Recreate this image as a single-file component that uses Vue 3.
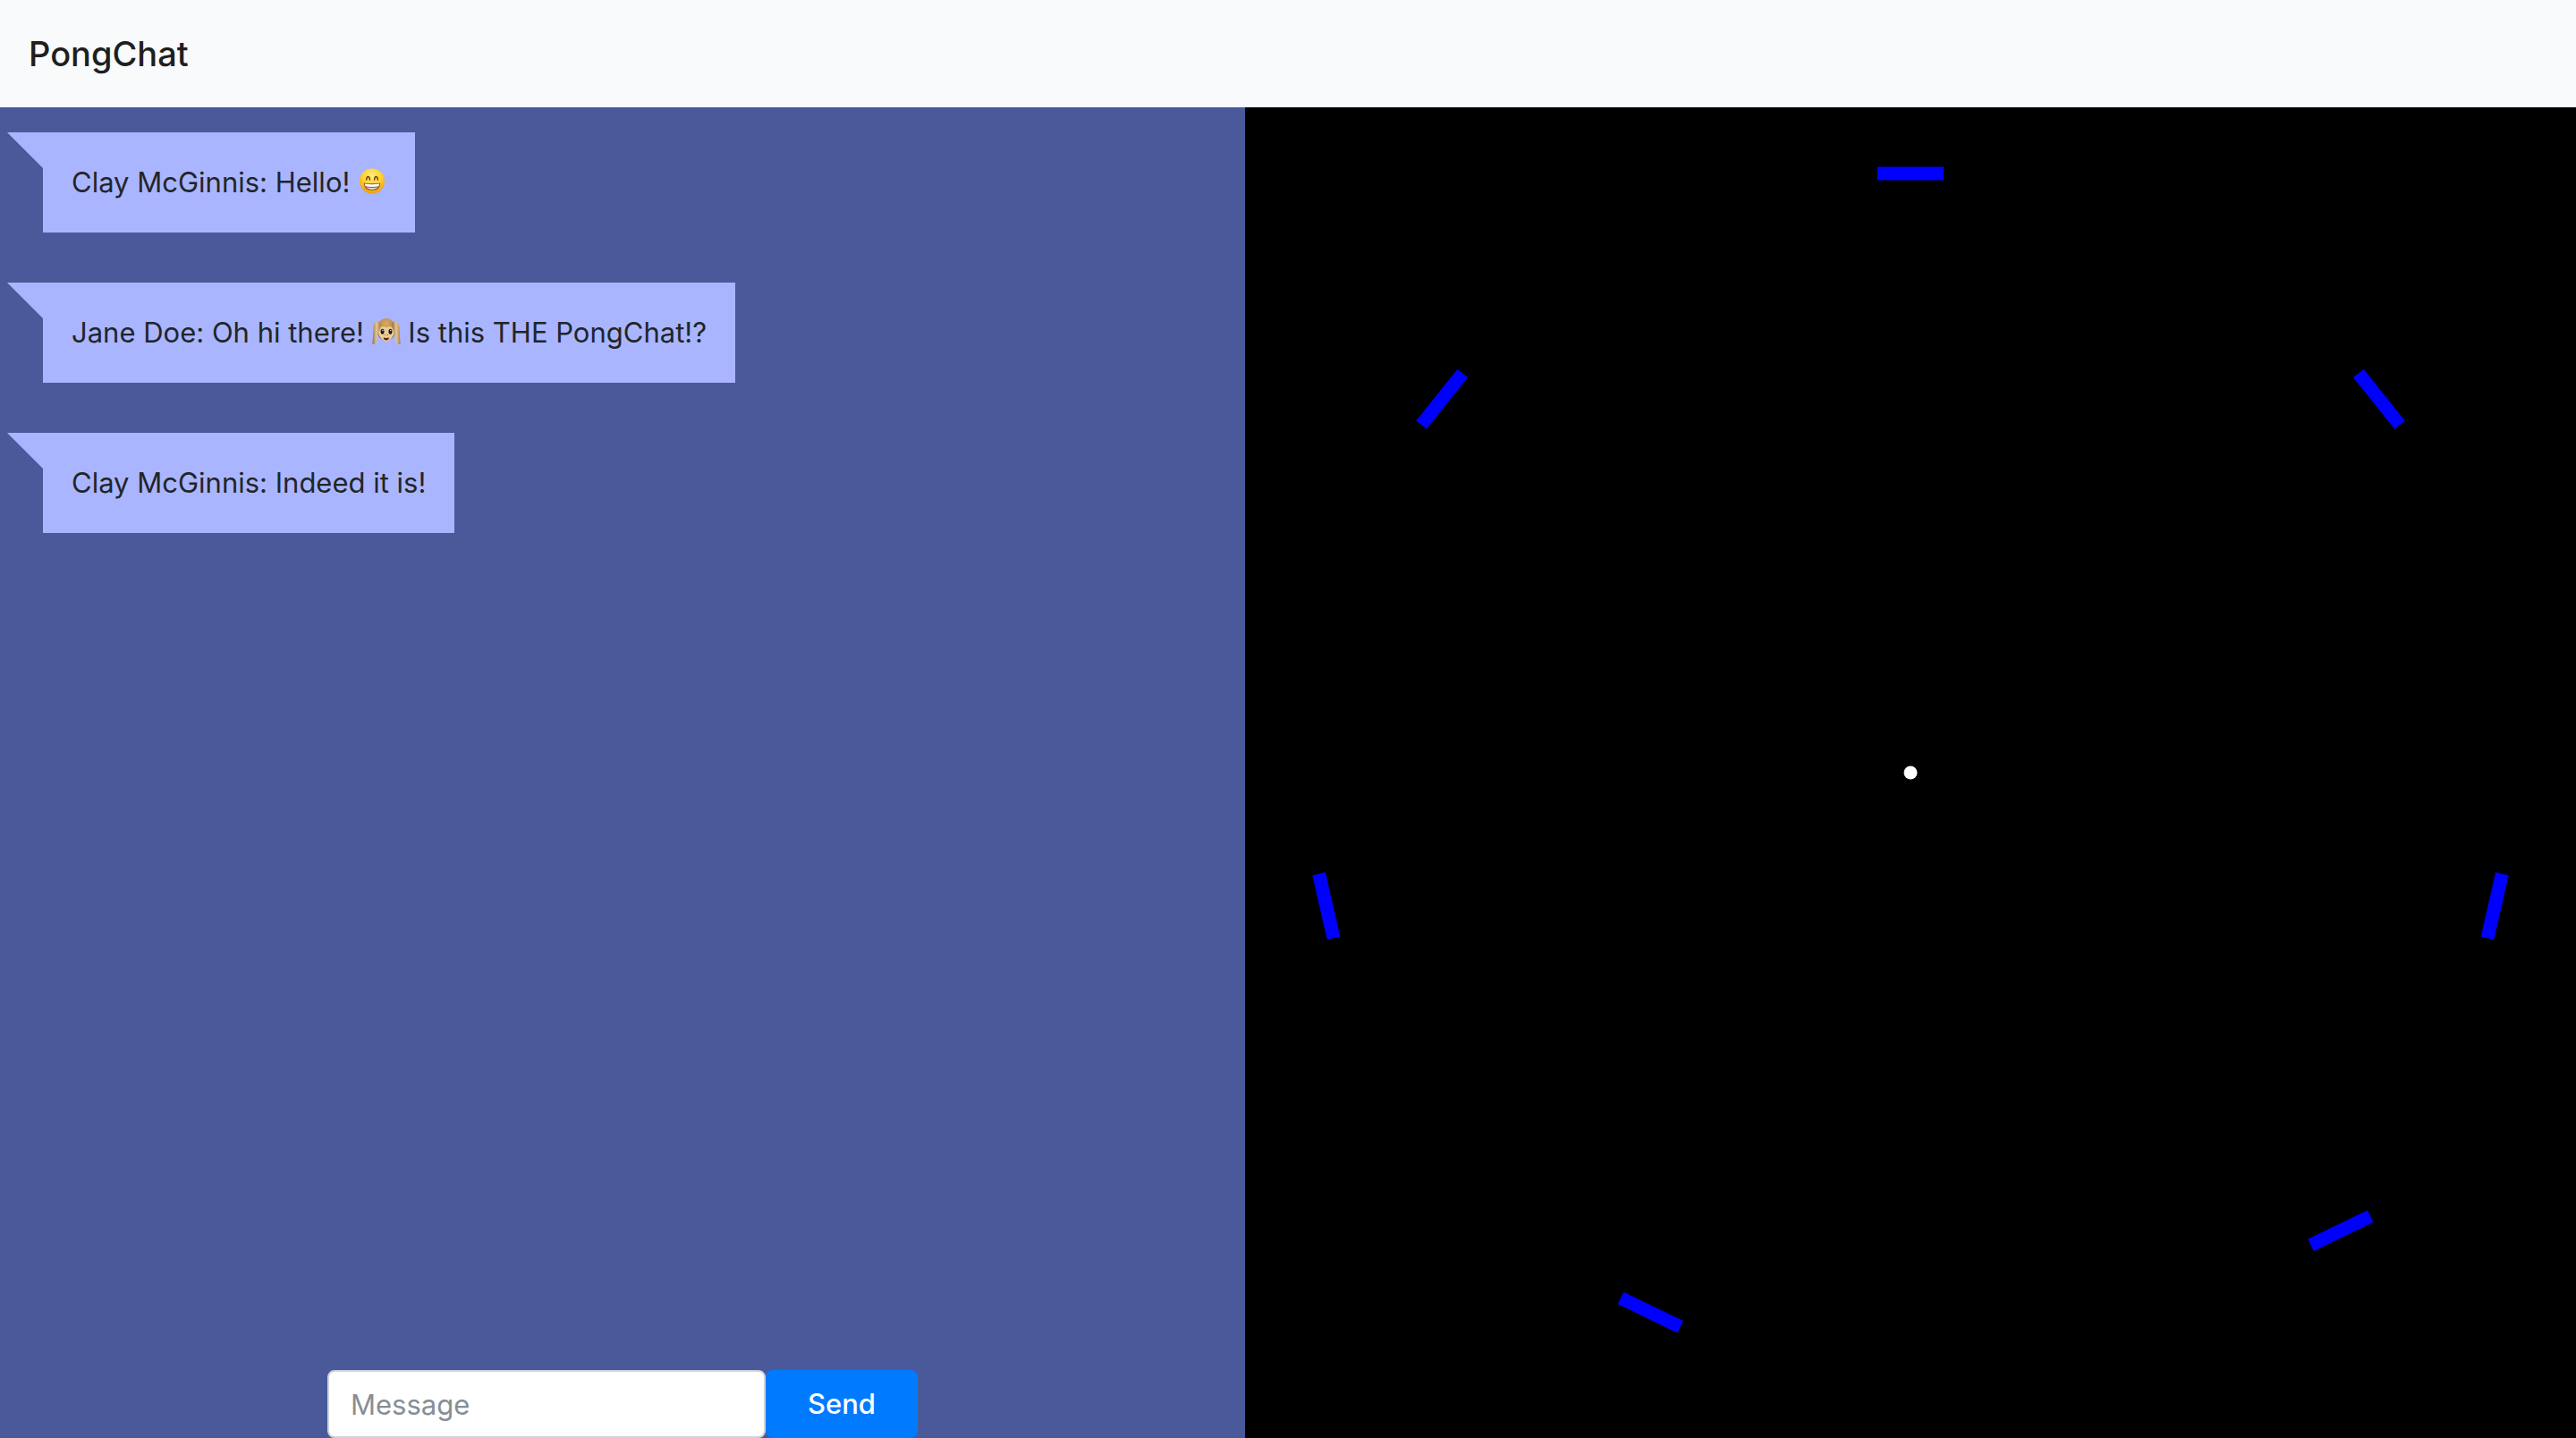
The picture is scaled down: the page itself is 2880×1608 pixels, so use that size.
<script setup>
import { ref } from 'vue'

const draft = ref('')

const messages = [
  { id: 1, author: 'Clay McGinnis', parts: [{ text: 'Hello! ' }, { emoji: 'grin' }] },
  {
    id: 2,
    author: 'Jane Doe',
    parts: [{ text: 'Oh hi there! ' }, { emoji: 'monkey' }, { text: ' Is this THE PongChat!?' }],
  },
  { id: 3, author: 'Clay McGinnis', parts: [{ text: 'Indeed it is!' }] },
]

// One paddle per side of the arena; slide is the travel along that side.
const slides = [0, 0, 0, -211, 0, 0, 0]
const paddles = slides.map((slide, side) => ({
  side,
  slide,
  angle: (side * 360) / slides.length,
}))
</script>

<template>
  <div class="page">
    <header class="navbar">
      <a class="brand" href="#">PongChat</a>
    </header>
    <main class="content">
      <section class="chat">
        <ul class="messages">
          <li v-for="m in messages" :key="m.id" class="bubble">
            <span>{{ m.author }}: </span>
            <template v-for="(part, i) in m.parts" :key="i">
              <svg v-if="part.emoji === 'grin'" class="emoji" viewBox="0 0 30 30" role="img" aria-label="😁">
                <defs>
                  <radialGradient id="grin-face" cx="50%" cy="30%" r="70%">
                    <stop offset="0" stop-color="#fff07a" />
                    <stop offset="0.55" stop-color="#fdd02f" />
                    <stop offset="1" stop-color="#ef9a10" />
                  </radialGradient>
                </defs>
                <circle cx="15" cy="15" r="14.500" fill="url(#grin-face)" />
                <path d="M8.500 13.500q.3-3.600 1.900-3.600t2 3.600M17.700 13.500q.3-3.600 1.900-3.600t2 3.600" fill="none" stroke="#75420c" stroke-width="1.600" stroke-linecap="round" />
                <path d="M5.500 17q9.500 1.800 19 0 .3 8.500-9.500 8.500T5.500 17z" fill="#8a5418" />
                <path d="M6.500 18q8.500 1.500 17 0l-.7 3q-7.800 1.300-15.600 0z" fill="#fff" />
                <path d="M8.200 22.100q6.800 1.100 13.600 0-2 2.500-6.800 2.500t-6.800-2.500z" fill="#e9e5e3" />
              </svg>
              <svg v-else-if="part.emoji === 'monkey'" class="emoji" viewBox="0 0 97 88" role="img" aria-label="🙉">
                <defs>
                  <linearGradient id="monkey-arm" x1="0" x2="1" y1="0" y2="0">
                    <stop offset="0" stop-color="#98703f" />
                    <stop offset="0.5" stop-color="#e6c88f" />
                    <stop offset="1" stop-color="#a67c4b" />
                  </linearGradient>
                  <radialGradient id="monkey-head" cx="50%" cy="25%" r="65%">
                    <stop offset="0" stop-color="#d9ab67" />
                    <stop offset="1" stop-color="#a87539" />
                  </radialGradient>
                </defs>
                <ellipse cx="48" cy="38" rx="32" ry="38" fill="url(#monkey-head)" />
                <path d="M48 32c-8-8-27-5-27 15 0 7 4 12 7 16 4 9 11 14 20 14s16-5 20-14c3-4 7-9 7-16 0-20-19-23-27-15z" fill="#eccd98" />
                <path d="M24 11C12 9 6 17 5 30L1 88h13l3-34c8-8 12-19 12-30 0-7-1-12-5-13z" fill="url(#monkey-arm)" />
                <path d="M73 11c12-2 18 6 19 19l4 58H83l-3-34c-8-8-12-19-12-30 0-7 1-12 5-13z" fill="url(#monkey-arm)" />
                <ellipse cx="35" cy="45" rx="6" ry="9" fill="#21170f" />
                <ellipse cx="62" cy="45" rx="6" ry="9" fill="#21170f" />
                <circle cx="36" cy="41" r="2" fill="#fff" />
                <circle cx="63" cy="41" r="2" fill="#fff" />
                <path d="M43 56h3M51 56h3" stroke="#80552e" stroke-width="3" />
                <path d="M38 65q10 3 20 0-2 9-10 9t-10-9z" fill="#5c2013" />
              </svg>
              <span v-else>{{ part.text }}</span>
            </template>
          </li>
        </ul>
        <form class="composer" @submit.prevent>
          <input v-model="draft" class="field" type="text" placeholder="Message" aria-label="Message" />
          <button class="send" type="submit">Send</button>
        </form>
      </section>
      <svg class="arena" viewBox="-744 -744 1488 1488" role="img" aria-label="Pong arena">
        <rect
          v-for="p in paddles"
          :key="p.side"
          x="-37"
          y="-7.500"
          width="74"
          height="15"
          fill="#0000ff"
          :transform="`rotate(${p.angle}) translate(${p.slide} -670)`"
        />
        <circle r="7.500" fill="#fff" />
      </svg>
    </main>
  </div>
</template>

<style>
body {
  margin: 0;
}
</style>

<style scoped>
.page {
  display: flex;
  flex-direction: column;
  min-height: 100vh;
  font-family: Inter, "Liberation Sans", sans-serif;
  font-size: 31px;
  line-height: 48px;
  color: #212529;
}

.navbar {
  display: flex;
  align-items: center;
  box-sizing: border-box;
  height: 120px;
  padding: 0 32px;
  background: #f8fafc;
}

.brand {
  font-size: 38px;
  font-weight: 500;
  line-height: 60px;
  color: #1e1f1f;
  text-decoration: none;
}

.content {
  display: flex;
  flex: 1;
}

.chat {
  display: flex;
  flex: 1;
  flex-direction: column;
  justify-content: space-between;
  align-items: center;
  background: #4a5999;
}

.messages {
  display: flex;
  flex-direction: column;
  align-items: flex-start;
  align-self: stretch;
  gap: 56px;
  margin: 0;
  padding: 28px 48px;
  list-style: none;
}

.bubble {
  position: relative;
  padding: 32px;
  background: #aab5ff;
  white-space: pre-wrap;
}

.bubble::before {
  content: "";
  position: absolute;
  top: 0;
  right: 100%;
  border-top: 40px solid #aab5ff;
  border-left: 40px solid transparent;
}

.emoji {
  width: 32px;
  height: 29px;
  vertical-align: -2px;
}

.composer {
  display: flex;
  width: 660px;
  max-width: 100%;
}

.field,
.send {
  box-sizing: border-box;
  height: 76px;
  border-radius: 8px;
  font: inherit;
}

.field {
  flex: 1;
  min-width: 0;
  padding: 0 24px;
  border: 2px solid #ced4da;
  background: #fff;
  color: #495057;
}

.field::placeholder {
  color: #868e96;
  opacity: 1;
}

.send {
  width: 170px;
  padding: 0;
  border: 0;
  background: #007bff;
  color: #fff;
  font-weight: 500;
}

.arena {
  display: block;
  height: calc(100vh - 120px);
  aspect-ratio: 1;
  background: #000;
}
</style>
